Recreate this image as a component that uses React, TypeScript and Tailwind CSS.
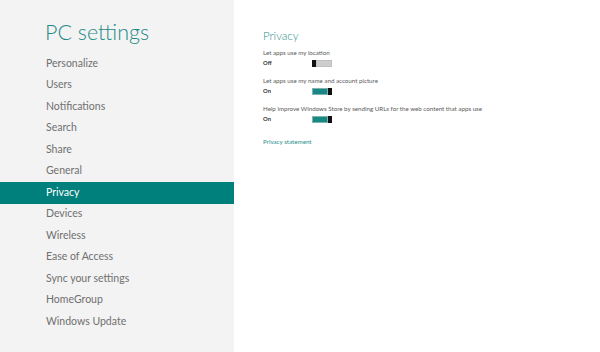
import React from "react";

const items = [
  "Personalize",
  "Users",
  "Notifications",
  "Search",
  "Share",
  "General",
  "Privacy",
  "Devices",
  "Wireless",
  "Ease of Access",
  "Sync your settings",
  "HomeGroup",
  "Windows Update",
];

function Toggle({ on }: { on: boolean }) {
  return (
    <div className="flex h-[7px] w-[20px] items-stretch">
      {on ? (
        <>
          <div className="flex-1 border border-[#7fb3b1] bg-[#178884]" />
          <div className="w-[4px] bg-[#111]" />
        </>
      ) : (
        <>
          <div className="w-[4px] bg-[#111]" />
          <div className="flex-1 border border-[#bfbfbf] bg-[#cdcdcd]" />
        </>
      )}
    </div>
  );
}

function Setting({ label, state, on }: { label: string; state: string; on: boolean }) {
  return (
    <div className="flex flex-col">
      <div className="text-[6.2px] leading-[9px] text-[#5a5a5a]">{label}</div>
      <div className="mt-[1px] flex h-[10px] items-center">
        <div className="w-[49px] text-[5.8px] font-bold text-[#333]">{state}</div>
        <Toggle on={on} />
      </div>
    </div>
  );
}

export default function App() {
  return (
    <div
      className="flex h-[352px] w-[600px] overflow-hidden bg-white"
      style={{ fontFamily: 'Lato, "Open Sans", sans-serif' }}
    >
      <div className="flex h-full w-[234px] flex-col bg-[#f3f3f3]">
        <div className="h-[53px] pl-[45px] pt-[19px] text-[21.5px] font-light leading-[26px] text-[#1e8a86]">
          PC settings
        </div>
        <div className="flex flex-col">
          {items.map((it) => (
            <div
              key={it}
              className={
                "flex h-[21.5px] items-center pl-[46px] text-[10.5px] " +
                (it === "Privacy" ? "bg-[#00807c] text-white" : "text-[#707070]")
              }
            >
              {it}
            </div>
          ))}
        </div>
      </div>
      <div className="flex flex-1 flex-col pl-[29px] pt-[28px]">
        <div className="text-[11.5px] font-light leading-[15px] text-[#2a8f8b]">Privacy</div>
        <div className="mt-[5px] flex flex-col gap-[8px]">
          <Setting label="Let apps use my location" state="Off" on={false} />
          <Setting label="Let apps use my name and account picture" state="On" on={true} />
          <Setting
            label="Help improve Windows Store by sending URLs for the web content that apps use"
            state="On"
            on={true}
          />
        </div>
        <div className="mt-[13px] text-[6.2px] text-[#2a8f8b]">Privacy statement</div>
      </div>
    </div>
  );
}
